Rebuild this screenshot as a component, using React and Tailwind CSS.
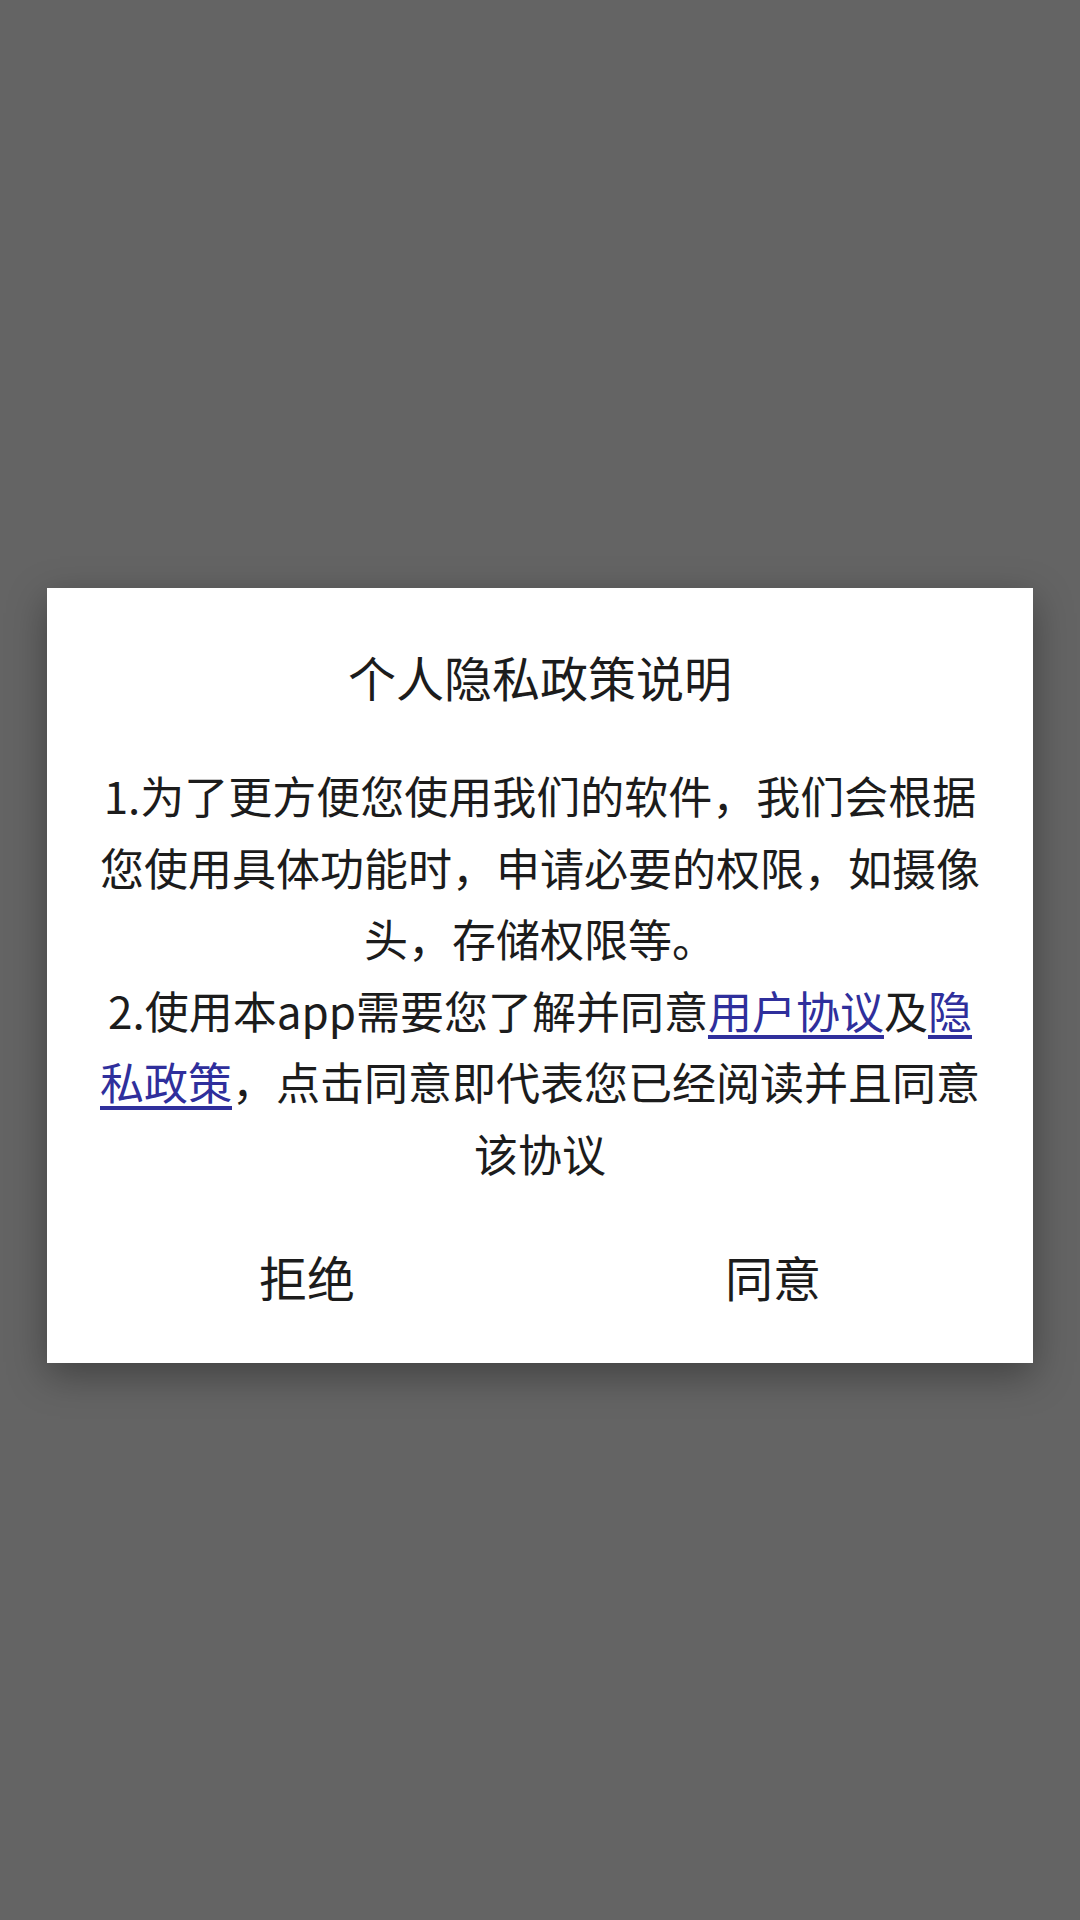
import React from 'react';

const font = { fontFamily: '"Noto Sans CJK SC", "Noto Sans", sans-serif' };

const PrivacyDialog = () => {
  return (
    <div className="w-[986px] bg-white shadow-[0_12px_36px_rgba(0,0,0,0.35)] flex flex-col pt-[58px] pb-[17px]">
      <h2 className="text-center text-[48px] leading-[60px] text-[#1c1c1c] font-normal">个人隐私政策说明</h2>
      <div className="mt-[54px] px-[52px] text-center text-[44px] leading-[71.5px] text-[#1c1c1c]">
        <p>1.为了更方便您使用我们的软件，我们会根据您使用具体功能时，申请必要的权限，如摄像头，存储权限等。</p>
        <p>
          2.使用本app需要您了解并同意
          <a className="text-[#2f2f9c] underline underline-offset-[6px]">用户协议</a>
          及
          <a className="text-[#2f2f9c] underline underline-offset-[6px]">隐私政策</a>
          ，点击同意即代表您已经阅读并且同意该协议
        </p>
      </div>
      <div className="mt-[17px] h-[140px] px-[27px] flex">
        <button className="flex-1 text-[48px] text-[#1c1c1c]">拒绝</button>
        <button className="flex-1 text-[48px] text-[#1c1c1c]">同意</button>
      </div>
    </div>
  );
};

export default function App() {
  return (
    <div style={font} className="w-[1080px] h-[1920px] bg-[#646464] flex flex-col items-center pt-[588px]">
      <PrivacyDialog />
    </div>
  );
}
